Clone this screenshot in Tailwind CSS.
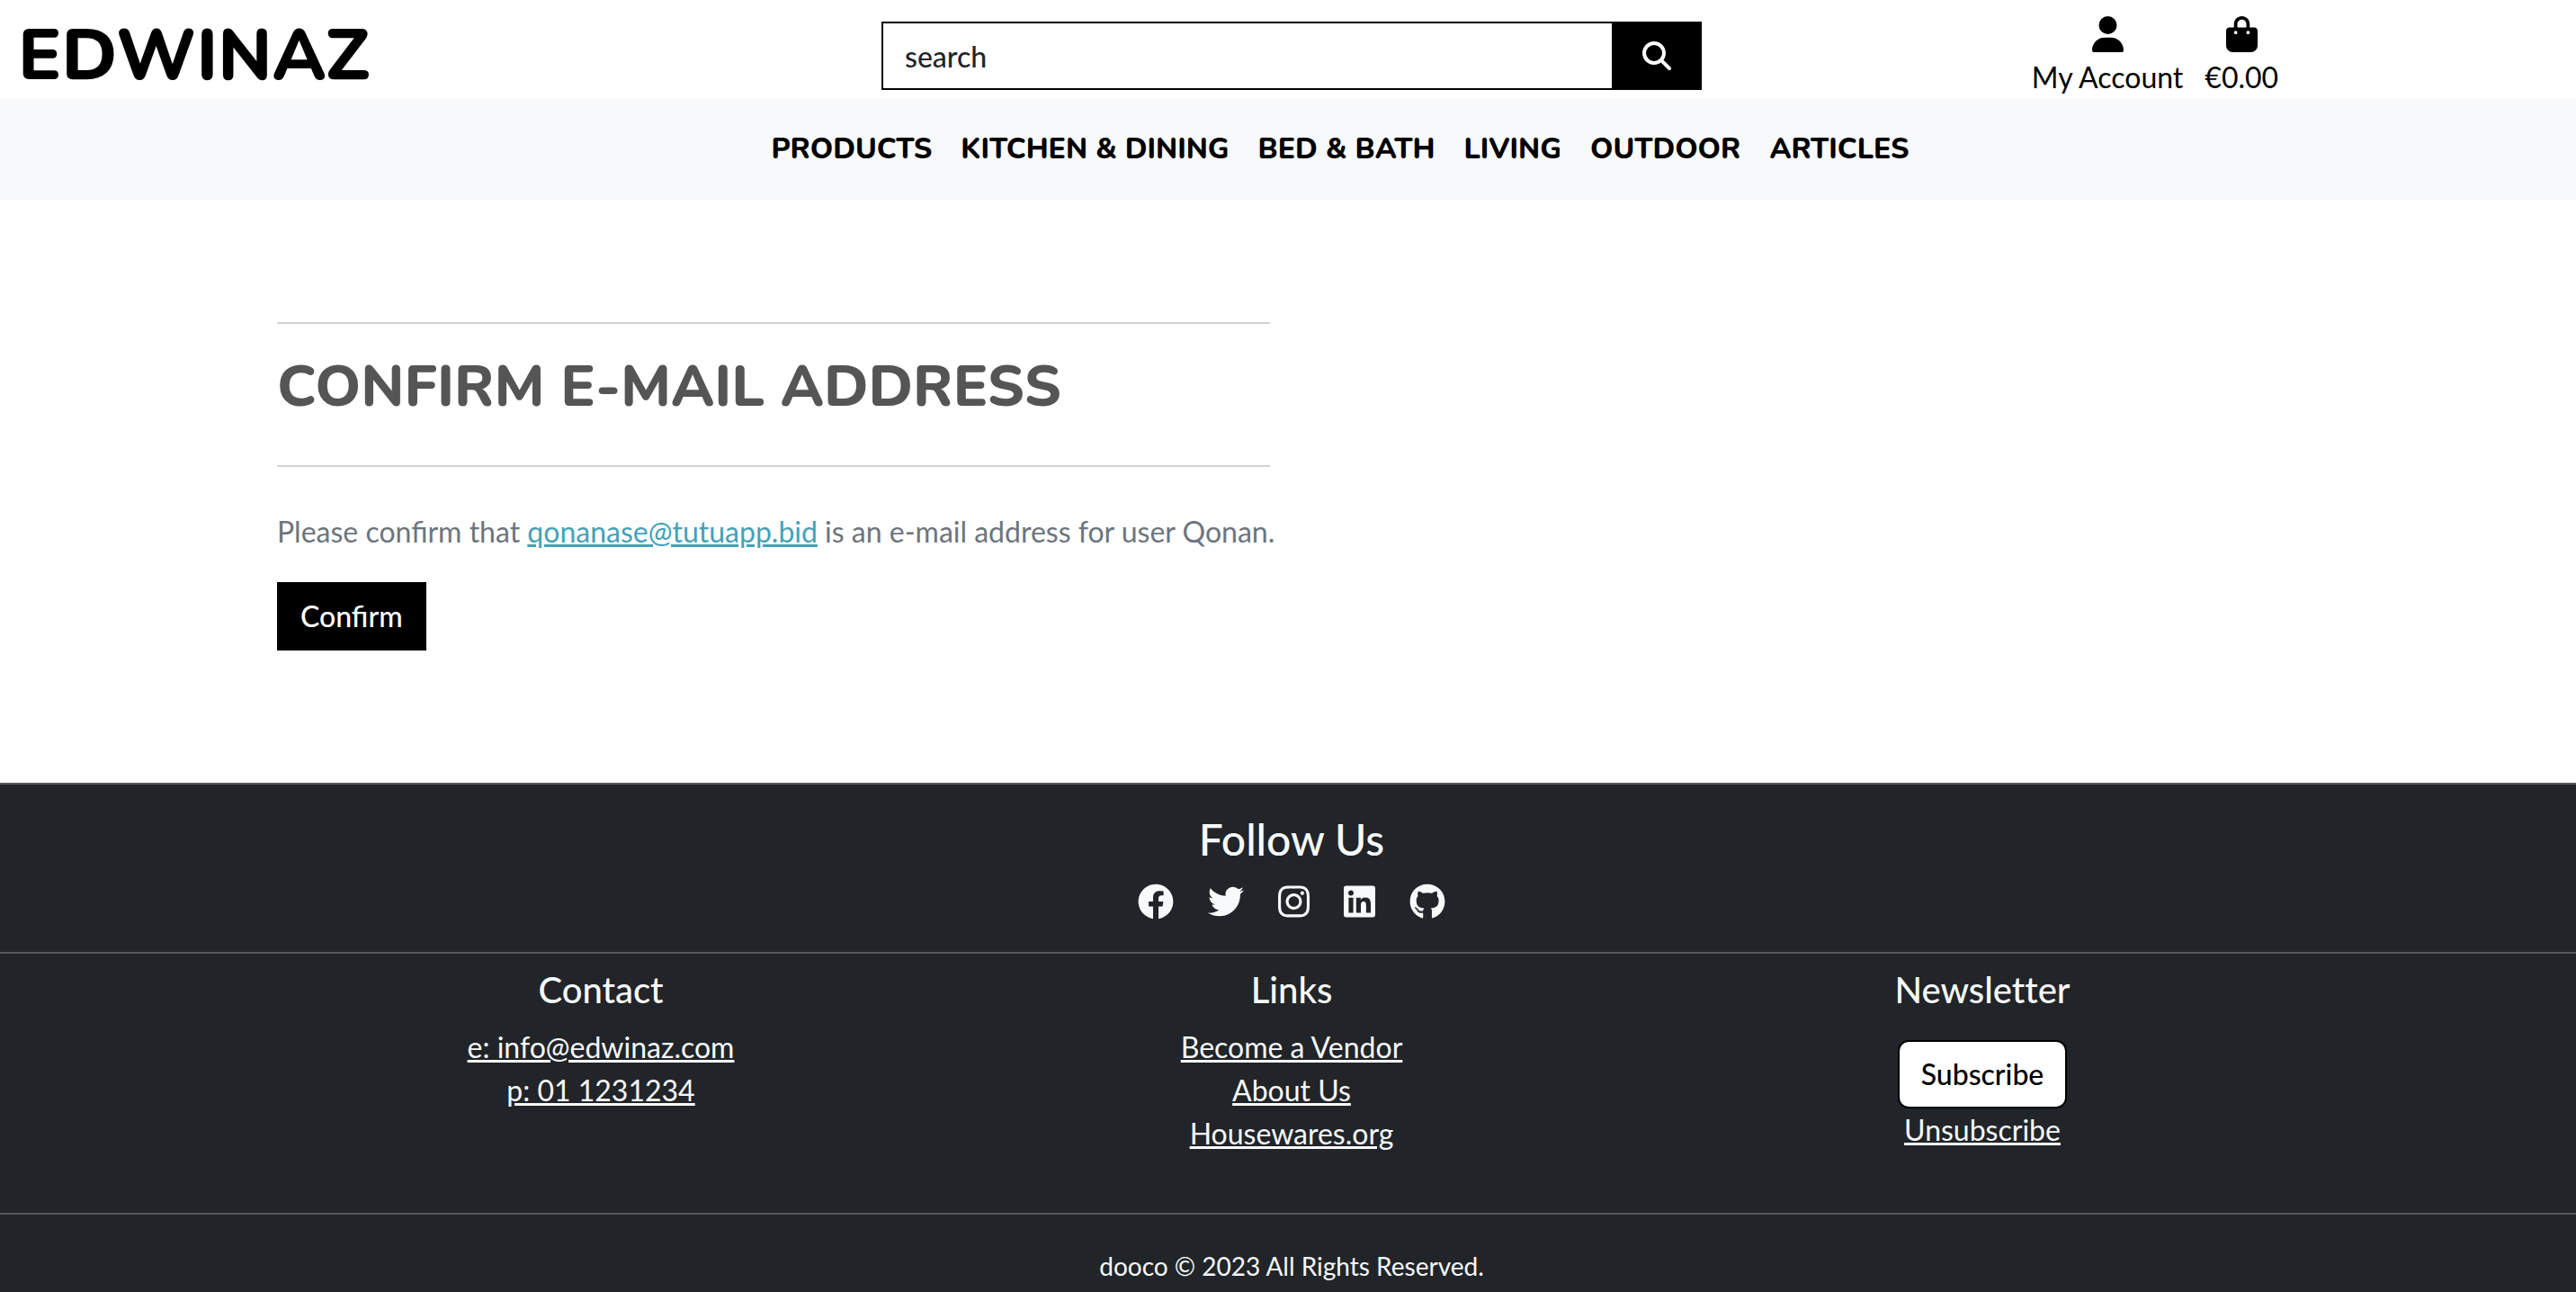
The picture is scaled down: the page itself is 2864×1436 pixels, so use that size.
<!DOCTYPE html>
<html lang="en">
<head>
<meta charset="utf-8">
<meta name="viewport" content="width=device-width, initial-scale=1">
<title>Confirm E-mail Address</title>
<script src="https://cdn.jsdelivr.net/npm/@tailwindcss/browser@4"></script>
</head>
<body class="flex min-h-screen flex-col bg-white font-['Lato',sans-serif] text-[32px] leading-[48px] text-[#212529]">

<header class="overflow-x-clip">
  <div class="-ml-1 -mr-3 grid h-[110px] grid-cols-3">
    <a href="#" class="flex items-center pt-3.5 pl-6 font-['Nunito','Lato',sans-serif] text-[80px] leading-[96px] font-extrabold text-black">EDWINAZ</a>
    <form class="flex px-6 pt-6">
      <input type="search" aria-label="search" placeholder="search" class="h-[76px] min-w-0 flex-1 border-2 border-r-0 border-black bg-white px-6 font-medium placeholder:text-[#212529] placeholder:opacity-100">
      <button type="button" aria-label="Submit search" class="flex h-[76px] w-[100px] items-center justify-center bg-black text-white">
        <svg class="size-8" viewBox="0 0 512 512" fill="currentColor"><path d="M416 208c0 45.900-14.900 88.300-40 122.700L502.600 457.400c12.500 12.500 12.500 32.800 0 45.300s-32.800 12.500-45.300 0L330.700 376c-34.400 25.200-76.800 40-122.700 40C93.100 416 0 322.900 0 208S93.100 0 208 0S416 93.100 416 208zM208 352a144 144 0 1 0 0-288 144 144 0 1 0 0 288z"/></svg>
      </button>
    </form>
    <div class="flex justify-center gap-6 pt-[18px] text-black">
      <a href="#" class="flex flex-col items-center gap-1">
        <svg class="h-10 w-[35px] shrink-0" viewBox="0 0 448 512" fill="currentColor"><path d="M224 256A128 128 0 1 0 224 0a128 128 0 1 0 0 256zm-45.700 48C79.800 304 0 383.800 0 482.300C0 498.700 13.300 512 29.700 512H418.300c16.400 0 29.700-13.300 29.700-29.700C448 383.800 368.200 304 269.700 304H178.300z"/></svg>
        <span>My Account</span>
      </a>
      <a href="#" class="flex flex-col items-center gap-1">
        <svg class="h-10 w-[35px] shrink-0" viewBox="0 0 448 512" fill="currentColor"><path d="M160 112c0-35.300 28.700-64 64-64s64 28.700 64 64v48H160V112zm-48 48H48c-26.500 0-48 21.500-48 48V416c0 53 43 96 96 96H352c53 0 96-43 96-96V208c0-26.500-21.500-48-48-48H336V112C336 50.100 285.900 0 224 0S112 50.100 112 112v48zm24 48a24 24 0 1 1 0 48 24 24 0 1 1 0-48zm152 24a24 24 0 1 1 48 0 24 24 0 1 1 -48 0z"/></svg>
        <span>€0.00</span>
      </a>
    </div>
  </div>
</header>

<nav class="flex h-28 items-center justify-center gap-8 bg-[#f8f9fa] pl-[116px] font-['Nunito','Lato',sans-serif] font-extrabold text-black">
  <a href="#">PRODUCTS</a>
  <a href="#">KITCHEN &amp; DINING</a>
  <a href="#">BED &amp; BATH</a>
  <a href="#">LIVING</a>
  <a href="#">OUTDOOR</a>
  <a href="#">ARTICLES</a>
</nav>

<main class="pt-[136px] pb-[147px] pl-2">
  <div class="mx-auto max-w-[2304px] px-6">
    <div class="flex max-w-[1104px] flex-col items-start">
      <h1 class="w-full border-y-2 border-[#d3d3d4] pt-8 pb-12 font-['Nunito','Lato',sans-serif] text-[64px] leading-[77px] font-extrabold text-[#555]">CONFIRM E-MAIL ADDRESS</h1>
      <p class="mt-12 mb-8 text-[#6c757d] xl:whitespace-nowrap">Please confirm that <a href="#" class="text-[#45a1b8] underline">qonanase@tutuapp.bid</a> is an e-mail address for user Qonan.</p>
      <button type="button" class="h-[76px] bg-black px-[26px] font-medium text-white">Confirm</button>
    </div>
  </div>
</main>

<footer class="grow border-t-2 border-[#55585c] bg-[#212529] text-center text-[#f8f9fa]">
  <section class="border-b-2 border-[#55585c] pt-8 pb-9 pl-2">
    <h2 class="text-[48px] leading-[58px] font-medium">Follow Us</h2>
    <div class="mt-5 flex justify-center gap-[38px]">
      <a href="#" aria-label="Facebook"><svg class="size-10" viewBox="0 0 512 512" fill="currentColor"><path d="M504 256C504 119 393 8 256 8S8 119 8 256c0 123.780 90.690 226.380 209.250 245V327.690h-63V256h63v-54.640c0-62.150 37-96.480 93.670-96.480 27.140 0 55.520 4.840 55.520 4.840v61h-31.280c-30.800 0-40.410 19.120-40.410 38.730V256h68.780l-11 71.690h-57.780V501C413.310 482.380 504 379.780 504 256z"/></svg></a>
      <a href="#" aria-label="Twitter"><svg class="size-10" viewBox="0 0 512 512" fill="currentColor"><path d="M459.370 151.716c.325 4.548.325 9.097.325 13.645 0 138.720-105.583 298.558-298.558 298.558-59.452 0-114.680-17.219-161.137-47.106 8.447.974 16.568 1.299 25.340 1.299 49.055 0 94.213-16.568 130.274-44.832-46.132-.975-84.792-31.188-98.112-72.772 6.498.974 12.995 1.624 19.818 1.624 9.421 0 18.843-1.300 27.614-3.573-48.081-9.747-84.143-51.980-84.143-102.985v-1.299c13.969 7.797 30.214 12.670 47.431 13.319-28.264-18.843-46.781-51.005-46.781-87.391 0-19.492 5.197-37.360 14.294-52.954 51.655 63.675 129.300 105.258 216.365 109.807-1.624-7.797-2.599-15.918-2.599-24.040 0-57.828 46.782-104.934 104.934-104.934 30.213 0 57.502 12.670 76.670 33.137 23.715-4.548 46.456-13.320 66.599-25.340-7.798 24.366-24.366 44.833-46.132 57.827 21.117-2.273 41.584-8.122 60.426-16.243-14.292 20.791-32.161 39.308-52.628 54.253z"/></svg></a>
      <a href="#" aria-label="Instagram"><svg class="h-10 w-[35px]" viewBox="0 0 448 512" fill="currentColor"><path d="M224.100 141c-63.600 0-114.900 51.300-114.900 114.900s51.300 114.900 114.900 114.900S339 319.500 339 255.900 287.700 141 224.100 141zm0 189.600c-41.100 0-74.700-33.500-74.700-74.700s33.500-74.700 74.700-74.700 74.700 33.500 74.700 74.700-33.600 74.700-74.700 74.700zm146.400-194.300c0 14.900-12 26.800-26.800 26.800-14.900 0-26.800-12-26.800-26.800s12-26.800 26.800-26.800 26.800 12 26.800 26.800zm76.100 27.200c-1.700-35.900-9.900-67.700-36.200-93.900-26.200-26.200-58-34.400-93.900-36.200-37-2.100-147.900-2.100-184.900 0-35.800 1.700-67.600 9.900-93.900 36.100s-34.400 58-36.200 93.900c-2.100 37-2.100 147.900 0 184.900 1.700 35.900 9.900 67.700 36.200 93.900s58 34.400 93.900 36.200c37 2.100 147.900 2.100 184.900 0 35.900-1.700 67.700-9.900 93.900-36.200 26.200-26.200 34.400-58 36.200-93.900 2.100-37 2.100-147.800 0-184.800zM398.800 388c-7.800 19.600-22.900 34.700-42.600 42.600-29.500 11.700-99.500 9-132.100 9s-102.700 2.600-132.100-9c-19.600-7.800-34.700-22.900-42.600-42.600-11.700-29.500-9-99.500-9-132.100s-2.600-102.700 9-132.100c7.800-19.600 22.900-34.700 42.600-42.600 29.500-11.700 99.500-9 132.100-9s102.700-2.600 132.100 9c19.600 7.800 34.700 22.900 42.600 42.600 11.700 29.500 9 99.500 9 132.100s2.700 102.700-9 132.100z"/></svg></a>
      <a href="#" aria-label="LinkedIn"><svg class="h-10 w-[35px]" viewBox="0 0 448 512" fill="currentColor"><path d="M416 32H31.900C14.300 32 0 46.500 0 64.300v383.400C0 465.500 14.300 480 31.900 480H416c17.600 0 32-14.500 32-32.300V64.300c0-17.800-14.400-32.300-32-32.300zM135.400 416H69V202.200h66.500V416zm-33.200-243c-21.300 0-38.500-17.300-38.500-38.500S80.900 96 102.200 96c21.200 0 38.500 17.300 38.500 38.500 0 21.300-17.200 38.500-38.500 38.500zm282.100 243h-66.400V312c0-24.800-.5-56.700-34.500-56.700-34.600 0-39.900 27-39.900 54.900V416h-66.400V202.200h63.700v29.200h.9c8.900-16.800 30.600-34.500 62.900-34.500 67.200 0 79.700 44.300 79.700 101.900V416z"/></svg></a>
      <a href="#" aria-label="GitHub"><svg class="size-10" viewBox="0 0 496 512" fill="currentColor"><path d="M165.900 397.400c0 2-2.300 3.600-5.200 3.600-3.300.3-5.600-1.300-5.600-3.600 0-2 2.300-3.600 5.200-3.600 3-.3 5.600 1.300 5.600 3.600zm-31.100-4.500c-.7 2 1.300 4.300 4.300 4.900 2.600 1 5.600 0 6.200-2s-1.300-4.300-4.300-5.200c-2.600-.7-5.500.3-6.200 2.300zm44.200-1.700c-2.900.7-4.900 2.600-4.600 4.900.3 2 2.900 3.300 5.900 2.600 2.900-.7 4.900-2.600 4.600-4.600-.3-1.900-3-3.200-5.900-2.900zM244.800 8C106.100 8 0 113.300 0 252c0 110.900 69.800 205.800 169.500 239.200 12.800 2.300 17.300-5.600 17.300-12.100 0-6.200-.3-40.400-.3-61.400 0 0-70 15-84.700-29.800 0 0-11.400-29.100-27.800-36.600 0 0-22.900-15.700 1.600-15.400 0 0 24.900 2 38.600 25.800 21.900 38.600 58.600 27.500 72.900 20.900 2.300-16 8.800-27.100 16-33.700-55.900-6.200-112.300-14.300-112.300-110.500 0-27.500 7.600-41.300 23.600-58.900-2.600-6.500-11.100-33.300 2.600-67.900 20.900-6.500 69 27 69 27 20-5.600 41.500-8.500 62.800-8.500s42.800 2.900 62.800 8.500c0 0 48.100-33.600 69-27 13.700 34.700 5.200 61.400 2.600 67.900 16 17.700 25.800 31.500 25.800 58.900 0 96.500-58.900 104.200-114.800 110.500 9.200 7.900 17 22.900 17 46.400 0 33.700-.3 75.400-.3 83.600 0 6.500 4.600 14.400 17.300 12.100C428.200 457.800 496 362.900 496 252 496 113.300 383.500 8 244.800 8zM97.200 352.900c-1.300 1-1 3.300.7 5.200 1.600 1.600 3.900 2.300 5.200 1 1.300-1 1-3.300-.7-5.200-1.600-1.600-3.900-2.300-5.200-1zm-10.800-8.100c-.7 1.300.3 2.900 2.300 3.900 1.600 1 3.600.7 4.300-.7.7-1.300-.3-2.900-2.300-3.900-2-.6-3.600-.3-4.300.7zm32.400 35.600c-1.600 1.300-1 4.300 1.300 6.200 2.300 2.300 5.200 2.600 6.500 1 1.300-1.300.7-4.300-1.300-6.200-2.200-2.300-5.200-2.600-6.500-1zm-11.400-14.700c-1.600 1-1.600 3.600 0 5.900 1.600 2.300 4.300 3.300 5.600 2.300 1.600-1.300 1.600-3.900 0-6.200-1.400-2.300-4-3.300-5.600-2z"/></svg></a>
    </div>
  </section>
  <section class="border-b-2 border-[#55585c] pt-4 pb-16 pl-2">
    <div class="mx-auto grid max-w-[2304px] grid-cols-3">
      <div>
        <h3 class="mb-4 text-[40px] leading-[48px] font-medium">Contact</h3>
        <ul>
          <li><a href="#" class="underline">e: info@edwinaz.com</a></li>
          <li><a href="#" class="underline">p: 01 1231234</a></li>
        </ul>
      </div>
      <div>
        <h3 class="mb-4 text-[40px] leading-[48px] font-medium">Links</h3>
        <ul>
          <li><a href="#" class="underline">Become a Vendor</a></li>
          <li><a href="#" class="underline">About Us</a></li>
          <li><a href="#" class="underline">Housewares.org</a></li>
        </ul>
      </div>
      <div class="flex flex-col items-center">
        <h3 class="mb-8 text-[40px] leading-[48px] font-medium [font-variant-ligatures:no-common-ligatures]">Newsletter</h3>
        <button type="button" class="h-[76px] rounded-xl border-2 border-black bg-white px-6 font-medium text-black">Subscribe</button>
        <a href="#" class="underline">Unsubscribe</a>
      </div>
    </div>
  </section>
  <p class="pt-9 pl-2 text-[28px] leading-[42px]">dooco © 2023 All Rights Reserved.</p>
</footer>

</body>
</html>
